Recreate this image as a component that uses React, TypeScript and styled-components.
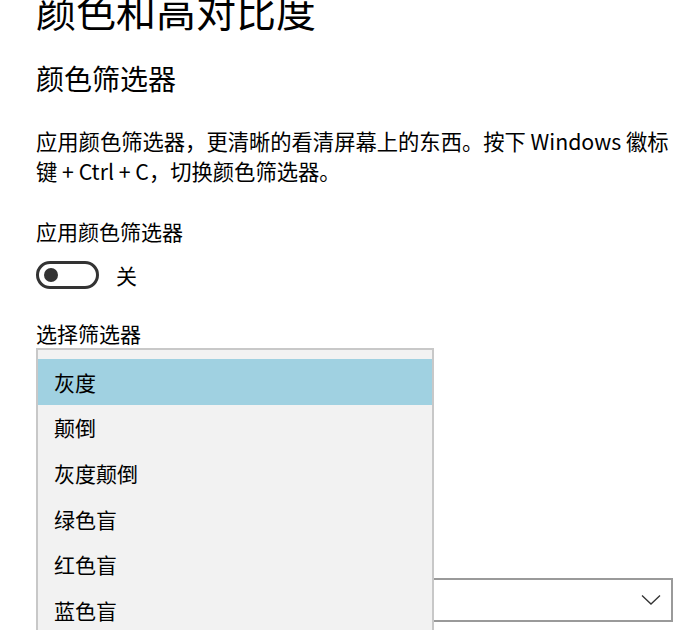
import React from 'react';
import styled, { createGlobalStyle } from 'styled-components';

const GlobalStyle = createGlobalStyle`
  html, body {
    margin: 0;
    padding: 0;
    background: #fff;
    overflow: hidden;
  }
  body {
    font-family: 'Noto Sans CJK SC', 'Noto Sans', sans-serif;
    color: #000;
  }
`;

const Page = styled.div`
  width: 700px;
  height: 630px;
  padding-left: 36px;
  box-sizing: border-box;
  overflow: hidden;
`;

const Title = styled.h1`
  margin: -10px 0 0;
  font-size: 40px;
  line-height: 40px;
  font-weight: 400;
`;

const Subtitle = styled.h2`
  margin: 34px 0 0;
  font-size: 28px;
  line-height: 28px;
  font-weight: 400;
`;

const Desc = styled.p`
  margin: 34px 0 0;
  width: 645px;
  font-size: 21.3px;
  line-height: 30px;
`;

const Label = styled.div<{ $gap: number }>`
  margin-top: ${(p) => p.$gap}px;
  font-size: 21px;
  line-height: 30px;
`;

const ToggleRow = styled.div`
  display: flex;
  align-items: center;
  gap: 17px;
  margin-top: 14px;
`;

const Toggle = styled.div`
  width: 63px;
  height: 28px;
  box-sizing: border-box;
  border: 3px solid #333;
  border-radius: 14px;
  display: flex;
  align-items: center;
  padding-left: 5px;
`;

const Knob = styled.span`
  width: 14px;
  height: 14px;
  border-radius: 50%;
  background: #333;
`;

const ToggleText = styled.span`
  font-size: 21px;
  line-height: 30px;
`;

const Field = styled.div`
  position: relative;
`;

const Select = styled.div`
  margin-top: 230px;
  width: 637px;
  height: 44px;
  box-sizing: border-box;
  border: 2px solid #9a9a9a;
  display: flex;
  align-items: center;
  justify-content: flex-end;
  padding-right: 10px;
`;

const Popup = styled.ul`
  position: absolute;
  top: 30px;
  left: 0;
  width: 398px;
  box-sizing: border-box;
  margin: 0;
  padding: 9px 0 20px;
  list-style: none;
  background: #f2f2f2;
  border: 2px solid #c8c8c8;
  border-bottom: none;
`;

const Item = styled.li<{ $selected?: boolean }>`
  height: 45.6px;
  display: flex;
  align-items: center;
  padding-left: 16px;
  font-size: 21px;
  background: ${(p) => (p.$selected ? '#a0d1e1' : 'transparent')};
`;

const filters = ['灰度', '颠倒', '灰度颠倒', '绿色盲', '红色盲', '蓝色盲'];

const App = () => {
  return (
    <Page>
      <GlobalStyle />
      <Title>颜色和高对比度</Title>
      <Subtitle>颜色筛选器</Subtitle>
      <Desc>
        应用颜色筛选器，更清晰的看清屏幕上的东西。按下 Windows 徽标
        <br />键 + Ctrl + C，切换颜色筛选器。
      </Desc>
      <Label $gap={30}>应用颜色筛选器</Label>
      <ToggleRow>
        <Toggle>
          <Knob />
        </Toggle>
        <ToggleText>关</ToggleText>
      </ToggleRow>
      <Field>
        <Label $gap={28}>选择筛选器</Label>
        <Select>
          <svg width="20" height="12" viewBox="0 0 20 12">
            <polyline points="1,1.5 10,10 19,1.5" fill="none" stroke="#333" strokeWidth="1.3" />
          </svg>
        </Select>
        <Popup>
          {filters.map((name, i) => (
            <Item key={name} $selected={i === 0}>
              {name}
            </Item>
          ))}
        </Popup>
      </Field>
    </Page>
  );
};

export default App;
